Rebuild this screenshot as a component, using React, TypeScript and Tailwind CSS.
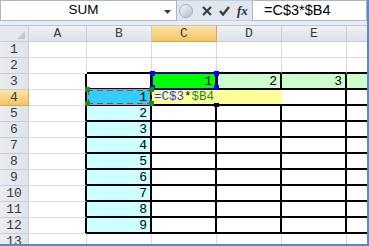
import React from 'react';

type Col = { key: string; w: string };

const COLS: Col[] = [
  { key: 'A', w: 'w-[58px]' },
  { key: 'B', w: 'w-[65px]' },
  { key: 'C', w: 'w-[65px]' },
  { key: 'D', w: 'w-[65px]' },
  { key: 'E', w: 'w-[65px]' },
  { key: 'F', w: 'w-[20px]' },
];

const ROWS = [1, 2, 3, 4, 5, 6, 7, 8, 9, 10, 11, 12, 13];

const mono = { fontFamily: '"Liberation Mono", "DejaVu Sans Mono", monospace' };

function cellValue(row: number, col: number): string {
  if (col === 1 && row >= 4 && row <= 12) return String(row - 3);
  if (row === 3 && col >= 2 && col <= 4) return String(col - 1);
  return '';
}

function cellBg(row: number, col: number): string {
  if (row === 3 && col === 2) return 'bg-[#00ff00]';
  if (row === 3 && col >= 3) return 'bg-[#ccffcc]';
  if (col === 1 && row === 4) return 'bg-[#33ccff]';
  if (col === 1 && row >= 5 && row <= 12) return 'bg-[#ccffff]';
  return 'bg-white';
}

function cellBorders(row: number, col: number): string {
  const inRows = row >= 3 && row <= 12;
  let right = 'border-r border-r-[#d9d9d9]';
  if (col === 5) right = 'border-r-0';
  else if (inRows) right = 'border-r-2 border-r-black';
  const bottom =
    row >= 2 && row <= 12 && col >= 1 ? 'border-b-2 border-b-black' : 'border-b border-b-[#d9d9d9]';
  return `${right} ${bottom}`;
}

function Handle({ pos, color }: { pos: string; color: string }) {
  return <div className={`absolute w-[5px] h-[5px] z-20 ${pos} ${color}`} />;
}

function Cell({ row, col }: { row: number; col: number }) {
  const c = COLS[col];
  const value = cellValue(row, col);
  return (
    <div
      className={`relative shrink-0 h-[16px] box-border flex items-center justify-end pr-[3px] text-[13px] text-black leading-none ${c.w} ${cellBg(row, col)} ${cellBorders(row, col)}`}
      style={mono}
    >
      {value}

      {/* C$3 reference highlight */}
      {row === 3 && col === 2 && (
        <>
          <div className="absolute left-0 top-[-2px] w-[66px] h-[17px] border border-[#0000ff] z-10" />
          <Handle pos="left-[-2px] top-[-3px]" color="bg-[#0000ff]" />
          <Handle pos="right-[-4px] top-[-3px]" color="bg-[#0000ff]" />
          <Handle pos="left-[-2px] bottom-[-2px]" color="bg-[#0000ff]" />
          <Handle pos="right-[-4px] bottom-[-2px]" color="bg-[#0000ff]" />
        </>
      )}

      {/* $B4 reference highlight */}
      {row === 4 && col === 1 && (
        <>
          <div className="absolute left-0 top-[-1px] w-[66px] h-[16px] border-2 border-dashed border-[#1f8a1f] bg-transparent z-10 outline outline-1 outline-[#ff66cc] outline-offset-[-1px]" />
          <Handle pos="left-[-2px] top-[-3px]" color="bg-[#1f8a1f]" />
          <Handle pos="right-[-4px] top-[-3px]" color="bg-[#1f8a1f]" />
          <Handle pos="left-[-2px] bottom-[-2px]" color="bg-[#1f8a1f]" />
          <Handle pos="right-[-4px] bottom-[-2px]" color="bg-[#1f8a1f]" />
        </>
      )}

      {/* in-cell editor */}
      {row === 4 && col === 2 && (
        <>
          <div
            className="absolute left-0 top-0 w-[130px] h-[14px] bg-[#ffff99] z-10 flex items-center pl-[2px] text-[12.5px]"
            style={mono}
          >
            <span className="text-[#1a3cff]">=C$3</span>
            <span className="text-black">*</span>
            <span className="text-[#1c8a1c]">$B4</span>
          </div>
          <div className="absolute right-[-4px] bottom-[-3px] w-[5px] h-[4px] bg-black z-20" />
        </>
      )}
    </div>
  );
}

function RowHeader({ row }: { row: number }) {
  const active = row === 4;
  return (
    <div
      className={`shrink-0 w-[29px] h-[16px] box-border flex items-center justify-center text-[13px] leading-none border-r border-b ${
        active
          ? 'bg-gradient-to-b from-[#fbe3a9] to-[#f3c462] border-[#e0a83e] text-[#3c3c3c]'
          : 'bg-gradient-to-r from-[#e9edf2] to-[#dfe4ea] border-[#c5cdd8] text-[#3a3a3a]'
      }`}
      style={mono}
    >
      {row}
    </div>
  );
}

export default function App() {
  return (
    <div className="w-[369px] h-[246px] overflow-hidden bg-white border-r-2 border-b-2 border-[#5e87bd] box-border">
      {/* Formula bar */}
      <div className="flex h-[21px] bg-[#dfe6ef]">
        <div className="w-[177px] h-[21px] bg-white border border-[#a8b6c8] flex items-center box-border">
          <span
            className="flex-1 text-center text-[13.5px] text-black pl-[2px]"
            style={{ fontFamily: '"Liberation Sans", Arial, sans-serif' }}
          >
            SUM
          </span>
          <svg width="7" height="4" viewBox="0 0 7 4" className="mr-[5px] mt-[2px]">
            <path d="M0 0H7L3.5 4Z" fill="#3a3a3a" />
          </svg>
        </div>
        <div className="w-[75px] h-[21px] flex items-center pl-[2px] gap-[7px] box-border border-y border-[#c5cfdc]">
          <div className="w-[14px] h-[14px] rounded-full bg-gradient-to-br from-[#f4f6f8] to-[#b9c0c8] border border-[#a4adb8]" />
          <svg width="10" height="10" viewBox="0 0 10 10" className="ml-[2px]">
            <path d="M1 1L9 9M9 1L1 9" stroke="#3d3d3d" strokeWidth="2.2" />
          </svg>
          <svg width="11" height="10" viewBox="0 0 11 10">
            <path d="M1 5L4 8.5L10 1" stroke="#3d3d3d" strokeWidth="2.4" fill="none" />
          </svg>
          <span
            className="italic font-bold text-[13px] text-[#303030] leading-none"
            style={{ fontFamily: '"Liberation Serif", "Times New Roman", serif' }}
          >
            fx
          </span>
        </div>
        <div
          className="flex-1 h-[21px] bg-white border border-[#a8b6c8] box-border flex items-center pl-[11px] text-[14.5px] text-black"
          style={{ fontFamily: '"Liberation Sans", Arial, sans-serif' }}
        >
          =C$3*$B4
        </div>
      </div>
      <div className="h-[5px] bg-[#e8edf3] border-b border-[#bcc6d2] box-border" />

      {/* Column headers */}
      <div className="flex h-[16px]">
        <div className="shrink-0 w-[29px] h-[16px] box-border border-r border-b border-[#c5cdd8] bg-[#e3e8ee] relative">
          <svg width="8" height="8" viewBox="0 0 8 8" className="absolute right-[3px] bottom-[2px]">
            <path d="M8 0V8H0Z" fill="#c2c8d0" />
          </svg>
        </div>
        {COLS.map((c, i) => (
          <div
            key={c.key}
            className={`shrink-0 h-[16px] box-border flex items-center justify-center text-[13px] leading-none border-b ${c.w} ${
              i === 5 ? 'border-r-0' : 'border-r'
            } ${
              i === 2
                ? 'bg-gradient-to-b from-[#fbe3a9] to-[#f3c462] border-[#e0a83e] text-[#3c3c3c]'
                : 'bg-gradient-to-b from-[#eef1f5] to-[#dde2e8] border-[#c5cdd8] text-[#3a3a3a]'
            }`}
            style={mono}
          >
            {i === 5 ? '' : c.key}
          </div>
        ))}
      </div>

      {/* Rows */}
      {ROWS.map((r) => (
        <div key={r} className="flex h-[16px]">
          <RowHeader row={r} />
          {COLS.map((c, i) => (
            <Cell key={c.key} row={r} col={i} />
          ))}
        </div>
      ))}
    </div>
  );
}
